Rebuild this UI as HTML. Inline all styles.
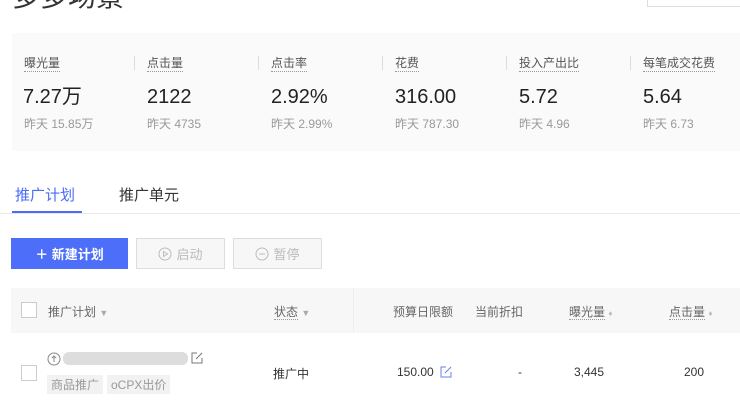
<!DOCTYPE html>
<html><head><meta charset="utf-8"><style>
*{margin:0;padding:0;box-sizing:border-box}
body{width:740px;height:411px;overflow:hidden;background:#fff;font-family:"Liberation Sans","Noto Sans CJK SC",sans-serif;color:#333;position:relative}
.a{position:absolute;white-space:nowrap}
.lab{font-size:12px;color:#555;border-bottom:1px dotted #999;line-height:15px}
.val{font-size:20px;color:#222;line-height:22px}
.y{font-size:12px;color:#999}
.dv{position:absolute;top:56px;width:1px;height:14px;background:#ddd}
.btn{position:absolute;top:238px;height:31px;border:1px solid #ddd;background:#f7f7f7;color:#bbb;font-size:13px;display:flex;align-items:center;justify-content:center;gap:4px}
.h{font-size:12px;color:#666}
.cb{position:absolute;width:16px;height:16px;border:1px solid #ccc;background:#fff}
</style></head><body>
<div class="a" style="left:12px;top:-25px;font-size:28px;color:#333">多多场景</div>
<div class="a" style="left:647px;top:-1px;width:95px;height:8px;border:1px solid #ddd"></div>
<div class="a" style="left:12px;top:33px;width:728px;height:118px;background:#fafafa"></div>
<div class="dv" style="left:134px"></div><div class="dv" style="left:258px"></div><div class="dv" style="left:382px"></div><div class="dv" style="left:506px"></div><div class="dv" style="left:630px"></div>
<div class="a lab" style="left:24px;top:56px">曝光量</div><div class="a val" style="left:23px;top:86px">7.27万</div><div class="a y" style="left:24px;top:115px">昨天 15.85万</div>
<div class="a lab" style="left:147px;top:56px">点击量</div><div class="a val" style="left:147px;top:86px">2122</div><div class="a y" style="left:147px;top:115px">昨天 4735</div>
<div class="a lab" style="left:271px;top:56px">点击率</div><div class="a val" style="left:271px;top:86px">2.92%</div><div class="a y" style="left:271px;top:115px">昨天 2.99%</div>
<div class="a lab" style="left:395px;top:56px">花费</div><div class="a val" style="left:395px;top:86px">316.00</div><div class="a y" style="left:395px;top:115px">昨天 787.30</div>
<div class="a lab" style="left:519px;top:56px">投入产出比</div><div class="a val" style="left:519px;top:86px">5.72</div><div class="a y" style="left:519px;top:115px">昨天 4.96</div>
<div class="a lab" style="left:643px;top:56px">每笔成交花费</div><div class="a val" style="left:643px;top:86px">5.64</div><div class="a y" style="left:643px;top:115px">昨天 6.73</div>
<div class="a" style="left:15px;top:184px;font-size:15px;color:#4a6cf7">推广计划</div>
<div class="a" style="left:119px;top:184px;font-size:15px;color:#333">推广单元</div>
<div class="a" style="left:0;top:213px;width:740px;height:1px;background:#e8e8e8"></div>
<div class="a" style="left:12px;top:211px;width:70px;height:2px;background:#4a6cf7"></div>
<div class="a" style="left:11px;top:238px;width:117px;height:31px;background:#4c6ef8;color:#fff;font-size:13px;font-weight:bold;display:flex;align-items:center;justify-content:center">＋ 新建计划</div>
<div class="btn" style="left:136px;width:89px"><svg width="14" height="14" viewBox="0 0 14 14"><circle cx="7" cy="7" r="6" fill="none" stroke="#bbb"/><path d="M5.5 4.5v5l4-2.5z" fill="none" stroke="#bbb"/></svg>启动</div>
<div class="btn" style="left:233px;width:89px"><svg width="14" height="14" viewBox="0 0 14 14"><circle cx="7" cy="7" r="6" fill="none" stroke="#bbb"/><path d="M4 7h6" stroke="#bbb"/></svg>暂停</div>
<div class="a" style="left:11px;top:288px;width:729px;height:45px;background:#f7f7f7"></div>
<div class="a" style="left:353px;top:288px;width:1px;height:45px;background:#eee"></div>
<div class="cb" style="left:21px;top:302px"></div>
<div class="a h" style="left:48px;top:303px">推广计划 <span style="color:#aaa;font-size:9px">▼</span></div>
<div class="a h" style="left:274px;top:303px"><span style="border-bottom:1px dotted #999">状态</span> <span style="color:#aaa;font-size:9px">▼</span></div>
<div class="a h" style="left:393px;top:303px">预算日限额</div>
<div class="a h" style="left:475px;top:303px">当前折扣</div>
<div class="a h" style="left:569px;top:303px"><span style="border-bottom:1px dotted #999">曝光量</span> <span style="color:#bbb;font-size:8px">♦</span></div>
<div class="a h" style="left:669px;top:303px"><span style="border-bottom:1px dotted #999">点击量</span> <span style="color:#bbb;font-size:8px">♦</span></div>
<div class="cb" style="left:21px;top:365px"></div>
<svg class="a" style="left:47px;top:352px" width="14" height="14" viewBox="0 0 14 14"><circle cx="7" cy="7" r="6" fill="none" stroke="#888"/><path d="M7 10V4M4.8 6.2L7 4l2.2 2.2" fill="none" stroke="#888"/></svg>
<div class="a" style="left:63px;top:352px;width:125px;height:13px;background:#ddd;border-radius:6px"></div>
<svg class="a" style="left:191px;top:352px" width="12" height="12" viewBox="0 0 12 12"><path d="M6 1H1v10h10V6M5 7l6-6" fill="none" stroke="#777"/></svg>
<div class="a" style="left:47px;top:375px;background:#f2f2f2;color:#999;font-size:12px;padding:1px 4px">商品推广</div>
<div class="a" style="left:107px;top:375px;background:#f2f2f2;color:#999;font-size:12px;padding:1px 4px">oCPX出价</div>
<div class="a" style="left:273px;top:365px;font-size:12px;color:#333">推广中</div>
<div class="a" style="left:397px;top:365px;font-size:12px;color:#333">150.00</div>
<svg class="a" style="left:440px;top:366px" width="12" height="12" viewBox="0 0 12 12"><path d="M6 1H1v10h10V6M5 7l6-6" fill="none" stroke="#6a7ff0"/></svg>
<div class="a" style="left:518px;top:365px;font-size:12px">-</div>
<div class="a" style="left:574px;top:365px;font-size:12px">3,445</div>
<div class="a" style="left:684px;top:365px;font-size:12px">200</div>
</body></html>
